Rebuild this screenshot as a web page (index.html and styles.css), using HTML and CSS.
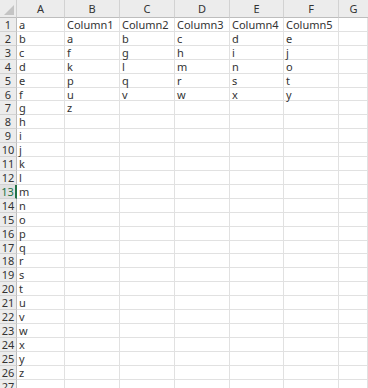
FILE: index.html
```html
<!doctype html>
<html lang="en">

	<head>
		<meta charset="UTF-8" />
		<title>Sheet</title>
		<link rel="stylesheet" href="styles.css">
	</head>

	<body>
		<section id="sheet">
			<div class="corner"><span class="tri"></span></div>
			<div class="colhead">A</div>
			<div class="colhead">B</div>
			<div class="colhead">C</div>
			<div class="colhead">D</div>
			<div class="colhead">E</div>
			<div class="colhead">F</div>
			<div class="colhead last">G</div>
		</section>
		<script type="text/javascript">
			const sheet = document.getElementById('sheet')
			const letters = 'abcdefghijklmnopqrstuvwxyz'.split('')
			const rows = []
			rows.push(['a', 'Column1', 'Column2', 'Column3', 'Column4', 'Column5'])
			for(let i = 0; i < 5; i++) {
				rows.push([letters[i + 1], letters[i * 5], letters[i * 5 + 1], letters[i * 5 + 2], letters[i * 5 + 3], letters[i * 5 + 4]])
			}
			rows.push(['g', 'z'])
			for(let i = 7; i < 26; i++) {
				rows.push([letters[i]])
			}
			rows.push([])

			for(let r = 0; r < rows.length; r++) {
				let head = document.createElement('div')
				head.className = 'rowhead'
				//选中的单元格所在行
				if(r == 12) head.classList.add('sel')
				head.textContent = r + 1
				sheet.appendChild(head)
				for(let c = 0; c < 7; c++) {
					let cell = document.createElement('div')
					cell.className = 'cell'
					cell.textContent = rows[r][c] || ''
					sheet.appendChild(cell)
				}
			}
		</script>
	</body>

</html>
```
FILE: styles.css
```css
* {
	margin: 0;
	padding: 0;
	box-sizing: border-box;
}

body {
	width: 368px;
	height: 388px;
	overflow: hidden;
	background: #fff;
	font-family: "Noto Sans", "Noto Sans CJK SC", sans-serif;
}

#sheet {
	display: grid;
	grid-template-columns: 17px 48px 55px 55px 55px 54px 55px 1fr;
	grid-template-rows: 18px;
	grid-auto-rows: 13.92px;
	width: 368px;
}

.corner {
	position: relative;
	background: #ececec;
	border-right: 1px solid #cfcfcf;
	border-bottom: 1px solid #bdbdbd;
}

.tri {
	position: absolute;
	right: 2px;
	bottom: 2px;
	width: 0;
	height: 0;
	border-left: 10px solid transparent;
	border-bottom: 10px solid #c4c4c4;
}

.colhead {
	background: #ececec;
	border-right: 1px solid #d2d2d2;
	border-bottom: 1px solid #bdbdbd;
	text-align: center;
	font-size: 11px;
	line-height: 18px;
	color: #333;
}

.colhead.last {
	border-right: none;
}

.rowhead {
	background: #ececec;
	border-right: 1px solid #bdbdbd;
	border-bottom: 1px solid #d2d2d2;
	text-align: center;
	font-size: 11px;
	line-height: 13px;
	color: #333;
}

.rowhead.sel {
	color: #217346;
	background: #e1e1e1;
	border-right: 2px solid #217346;
}

.cell {
	border-right: 1px solid #e1e1e1;
	border-bottom: 1px solid #e1e1e1;
	padding-left: 2px;
	font-size: 11px;
	line-height: 13px;
	color: #333;
	white-space: nowrap;
}
```
